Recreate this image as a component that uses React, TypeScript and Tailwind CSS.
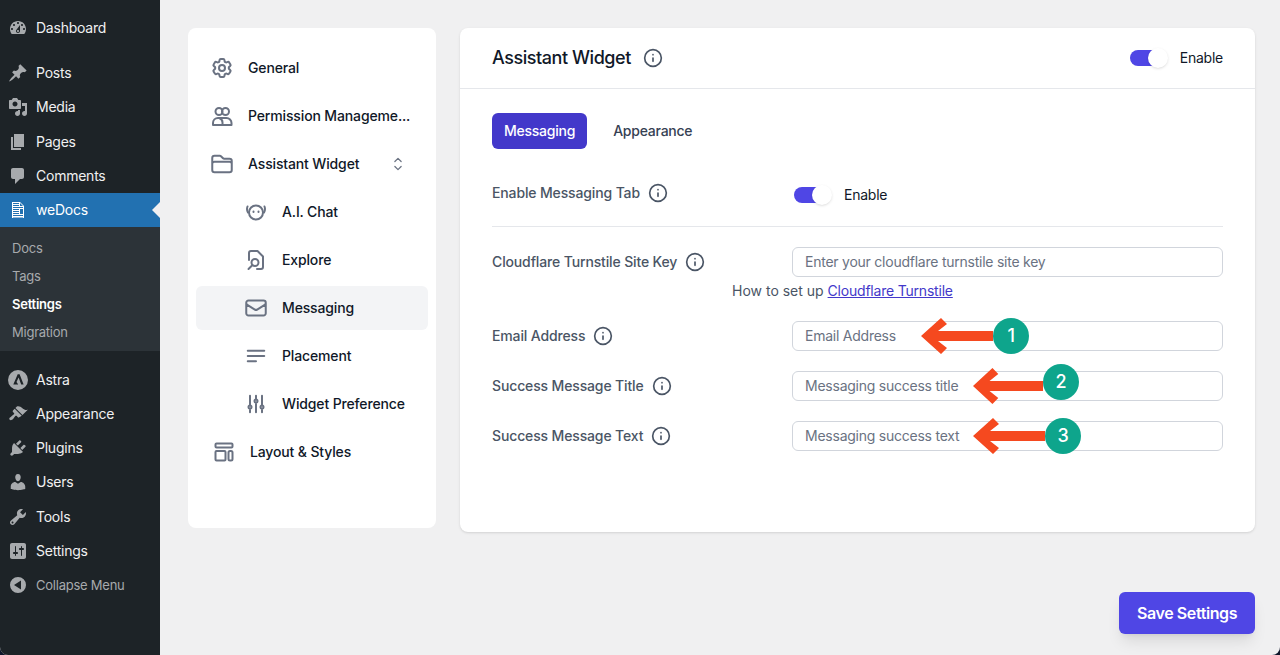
import clsx from 'clsx';
import { Info } from 'lucide-react';
import type { ReactNode } from 'react';
import {
  HiOutlineAdjustmentsVertical,
  HiOutlineBars3BottomLeft,
  HiOutlineChevronUpDown,
  HiOutlineCog6Tooth,
  HiOutlineEnvelope,
  HiOutlineFolder,
} from 'react-icons/hi2';

// wp-admin menu glyphs, 20x20 box
const WP_ICONS: Record<string, string> = {
  dashboard:
    'M3.76 16h12.48c1.1-1.37 1.76-3.11 1.76-5 0-4.42-3.58-8-8-8s-8 3.58-8 8c0 1.89.66 3.63 1.76 5zM10 4c.55 0 1 .45 1 1s-.45 1-1 1-1-.45-1-1 .45-1 1-1zM6 6c.55 0 1 .45 1 1s-.45 1-1 1-1-.45-1-1 .45-1 1-1zm8 0c.55 0 1 .45 1 1s-.45 1-1 1-1-.45-1-1 .45-1 1-1zm-5.37 5.55L12 7v6c0 1.1-.9 2-2 2s-2-.9-2-2c0-.57.24-1.08.63-1.45zM4 10c.55 0 1 .45 1 1s-.45 1-1 1-1-.45-1-1 .45-1 1-1zm12 0c.55 0 1 .45 1 1s-.45 1-1 1-1-.45-1-1 .45-1 1-1zm-5 3c0-.55-.45-1-1-1s-1 .45-1 1 .45 1 1 1 1-.45 1-1z',
  pin: 'M10.44 3.02l1.82-1.82 6.36 6.35-1.83 1.82c-1.05-.68-2.48-.57-3.41.36l-.75.75c-.92.93-1.04 2.35-.35 3.41l-1.83 1.82-2.41-2.41-2.8 2.79c-.42.42-3.38 2.71-3.8 2.29s1.86-3.39 2.28-3.81l2.79-2.79L4.1 9.36l1.83-1.82c1.05.69 2.48.57 3.4-.36l.75-.75c.93-.92 1.05-2.35.36-3.41z',
  media:
    'M13 11V4c0-.55-.45-1-1-1h-1.67L9 1H5L3.67 3H2c-.55 0-1 .45-1 1v7c0 .55.45 1 1 1h10c.55 0 1-.45 1-1zM7 4.5c1.38 0 2.5 1.12 2.5 2.5S8.38 9.5 7 9.5 4.5 8.38 4.5 7 5.62 4.5 7 4.5zM14 6h5v10.5c0 1.38-1.12 2.5-2.5 2.5S14 17.88 14 16.5s1.12-2.5 2.5-2.5c.17 0 .34.02.5.05V9h-3V6zm-4 8.05V13h2v3.5c0 1.38-1.12 2.5-2.5 2.5S7 17.88 7 16.5 8.12 14 9.5 14c.17 0 .34.02.5.05z',
  page: 'M6 15V2h10v13H6zm-1 1h8v2H3V5h2v11z',
  comments:
    'M5 2h9c1.1 0 2 .9 2 2v7c0 1.1-.9 2-2 2h-2l-5 5v-5H5c-1.1 0-2-.9-2-2V4c0-1.1.9-2 2-2z',
  document:
    'M12 2l4 4v12H4V2h8zM5 3v1h6V3H5zm7 3h3l-3-3v3zM5 5v1h6V5H5zm10 3V7H5v1h10zM5 9v1h6V9H5zm7 0v5h3V9h-3zM5 11v1h6v-1H5zm0 2v1h6v-1H5zm0 2v1h10v-1H5zm0 2v.5h10V17H5z',
  astra:
    'M10 0a10 10 0 1 0 0 20 10 10 0 0 0 0-20zm-.3 4.2h1.9l4 10.3h-2.4l-2.6-7-2.1 4.6 1.7 2.4H6.600l-1.300 0z',
  appearance:
    'M14.48 11.06L7.41 3.99l1.5-1.5c.5-.56 2.3-.47 3.51.32 1.21.8 1.43 1.28 2.91 2.1 1.18.64 2.45 1.26 4.45.85zm-.71.71L6.7 4.7 4.93 6.47c-.39.39-.39 1.02 0 1.41l1.06 1.06c.39.39.39 1.03 0 1.42-.6.6-1.43 1.11-2.21 1.69-.35.26-.7.53-1.01.84C1.43 13.23.7 14.8 1.72 15.82c.95.95 2.63-.02 3.1-.48.31-.31.58-.66.84-1.01.58-.78 1.1-1.6 1.7-2.21.39-.39 1.02-.39 1.41 0l1.06 1.06c.39.39 1.02.39 1.41 0z',
  plugins:
    'M13.11 4.36L9.87 7.6 8 5.73l3.24-3.24c.35-.34 1.05-.2 1.56.32.52.51.66 1.21.31 1.55zm-8 1.77l.91-1.12 9.01 9.01-1.19.84c-.71.71-2.63 1.16-3.82 1.16H6.14L4.9 17.26c-.59.59-1.54.59-2.12 0-.59-.58-.59-1.53 0-2.12l1.24-1.24v-3.88c0-1.13.4-3.19 1.09-3.89zm7.26 3.97l3.24-3.24c.34-.35 1.04-.21 1.55.31.52.51.66 1.21.31 1.55l-3.24 3.25z',
  users:
    'M10 9.25c-2.27 0-2.73-3.44-2.73-3.44C7 4.02 7.82 2 9.97 2c2.16 0 2.98 2.02 2.71 3.81 0 0-.41 3.44-2.68 3.44zm0 2.57L12.72 10c2.39 0 4.52 2.33 4.52 4.53v2.49s-3.65 1.13-7.24 1.13c-3.65 0-7.24-1.13-7.24-1.13v-2.49c0-2.25 1.94-4.48 4.47-4.48z',
  tools:
    'M16.68 9.77c-1.34 1.34-3.3 1.67-4.95.99l-5.41 6.52c-.99.99-2.59.99-3.58 0s-.99-2.59 0-3.57l6.52-5.42c-.68-1.65-.35-3.61.99-4.95 1.28-1.28 3.12-1.62 4.72-1.06l-2.89 2.89 2.82 2.82 2.86-2.87c.53 1.58.18 3.39-1.08 4.65zM3.81 16.21c.4.39 1.04.39 1.43 0 .4-.4.4-1.04 0-1.43-.39-.4-1.03-.4-1.43 0-.39.39-.39 1.03 0 1.43z',
  settings:
    'M18 16V4c0-1.1-.9-2-2-2H4c-1.1 0-2 .9-2 2v12c0 1.1.9 2 2 2h12c1.1 0 2-.9 2-2zM8 11h1c.55 0 1 .45 1 1s-.45 1-1 1H8v1.5c0 .28-.22.5-.5.5s-.5-.22-.5-.5V13H6c-.55 0-1-.45-1-1s.45-1 1-1h1V5.500c0-.28.22-.5.5-.5s.5.22.5.5V11zm5-2h-1c-.55 0-1-.45-1-1s.45-1 1-1h1V5.500c0-.28.22-.5.5-.5s.5.22.5.5V7h1c.55 0 1 .45 1 1s-.45 1-1 1h-1v5.500c0 .28-.22.5-.5.5s-.5-.22-.5-.5V9z',
  collapse:
    'M10 2a8 8 0 1 0 0 16 8 8 0 0 0 0-16zm3 3.500v9L6 10z',
};

function WpIcon({ name, className }: { name: string; className?: string }) {
  return (
    <svg viewBox="0 0 20 20" className={clsx('size-5 shrink-0 fill-current', className)}>
      <path fillRule="evenodd" d={WP_ICONS[name]} />
    </svg>
  );
}

function MenuItem({
  icon,
  label,
  active,
  muted,
  className,
}: {
  icon: string;
  label: string;
  active?: boolean;
  muted?: boolean;
  className?: string;
}) {
  return (
    <div
      className={clsx(
        'relative flex h-8.5 items-center gap-2 pl-2 text-sm',
        active ? 'bg-[#2271b1] text-white' : muted ? 'text-[#a7aaad]' : 'text-[#f0f0f1]',
        className,
      )}
    >
      <WpIcon name={icon} className={active ? 'text-white' : 'text-[#a7aaad]'} />
      <span>{label}</span>
      {active ? (
        <span className="absolute right-0 border-y-8 border-r-8 border-y-transparent border-r-[#f0f0f1]" />
      ) : null}
    </div>
  );
}

function AdminMenu() {
  return (
    <aside className="flex w-40 shrink-0 flex-col bg-[#1d2327] pt-2.5">
      <MenuItem icon="dashboard" label="Dashboard" className="h-9" />
      <MenuItem icon="pin" label="Posts" className="mt-2.5" />
      <MenuItem icon="media" label="Media" />
      <MenuItem icon="page" label="Pages" className="mt-px" />
      <MenuItem icon="comments" label="Comments" />
      <MenuItem icon="document" label="weDocs" active />
      <div className="flex flex-col bg-[#2c3338] pt-2 pb-1 text-[13px] text-[#a7aaad]">
        <div className="flex h-7 items-center pl-3">Docs</div>
        <div className="flex h-7 items-center pl-3">Tags</div>
        <div className="flex h-7 items-center pl-3 font-semibold text-white">Settings</div>
        <div className="flex h-7 items-center pl-3">Migration</div>
      </div>
      <MenuItem icon="astra" label="Astra" className="mt-3" />
      <MenuItem icon="appearance" label="Appearance" />
      <MenuItem icon="plugins" label="Plugins" />
      <MenuItem icon="users" label="Users" />
      <MenuItem icon="tools" label="Tools" className="mt-px" />
      <MenuItem icon="settings" label="Settings" />
      <MenuItem icon="collapse" label="Collapse Menu" muted className="text-[13px]" />
    </aside>
  );
}

function OutlineSvg({ children }: { children: ReactNode }) {
  return (
    <svg
      viewBox="0 0 24 24"
      fill="none"
      stroke="currentColor"
      strokeWidth={1.5}
      strokeLinecap="round"
      strokeLinejoin="round"
      className="size-6 shrink-0"
    >
      {children}
    </svg>
  );
}

const PeopleIcon = () => (
  <OutlineSvg>
    <circle cx="9" cy="7.500" r="3.500" />
    <circle cx="15.500" cy="7.500" r="3.500" />
    <path d="M3 21v-2a5 5 0 0 1 5-5h8.500a5 5 0 0 1 5 5v2z" />
    <path d="M12.500 21v-2.500a4.500 4.500 0 0 0-3-4.200" />
  </OutlineSvg>
);

const BotIcon = () => (
  <OutlineSvg>
    <circle cx="12" cy="12.500" r="7" />
    <path d="M3.500 6.500c-.8 2-.6 4 .500 6M20.500 6.500c.8 2 .6 4-.500 6" />
    <path d="M9.500 11.500v.5M14.500 11.500v.5" />
  </OutlineSvg>
);

const ExploreIcon = () => (
  <OutlineSvg>
    <path d="M5 12V5a2 2 0 0 1 2-2h6.500L19 8.500V19a2 2 0 0 1-2 2h-4" />
    <circle cx="11" cy="14.500" r="3.500" />
    <path d="M8.500 17 4.500 21" />
  </OutlineSvg>
);

const LayoutIcon = () => (
  <OutlineSvg>
    <rect x="3.500" y="3.500" width="17" height="4" rx="1" />
    <rect x="3.500" y="11" width="10" height="9.500" rx="1" />
    <rect x="16.500" y="11" width="4" height="9.500" rx="1.500" />
  </OutlineSvg>
);

function NavRow({
  icon,
  label,
  sub,
  active,
  trailing,
  className,
}: {
  icon: ReactNode;
  label: string;
  sub?: boolean;
  active?: boolean;
  trailing?: ReactNode;
  className?: string;
}) {
  return (
    <div
      className={clsx(
        'flex h-11 items-center gap-3.5 rounded-md text-sm font-medium tracking-[-0.01em] text-gray-900',
        sub ? 'pl-12' : 'pl-3.5',
        active && 'bg-gray-100',
        className,
      )}
    >
      <span className="text-gray-500 [&>svg]:size-6 [&>svg]:stroke-2">{icon}</span>
      <span className="w-41 whitespace-nowrap">{label}</span>
      {trailing}
    </div>
  );
}

function SettingsNav() {
  return (
    <nav className="flex h-125 w-62 shrink-0 flex-col gap-1 rounded-lg bg-white px-2 pt-4.5">
      <NavRow icon={<HiOutlineCog6Tooth />} label="General" />
      <NavRow icon={<PeopleIcon />} label="Permission Manageme..." />
      <NavRow
        icon={<HiOutlineFolder />}
        label="Assistant Widget"
        trailing={<HiOutlineChevronUpDown className="-ml-9.5 size-5 text-gray-500" />}
      />
      <NavRow icon={<BotIcon />} label="A.I. Chat" sub />
      <NavRow icon={<ExploreIcon />} label="Explore" sub />
      <NavRow icon={<HiOutlineEnvelope />} label="Messaging" sub active />
      <NavRow icon={<HiOutlineBars3BottomLeft />} label="Placement" sub />
      <NavRow icon={<HiOutlineAdjustmentsVertical />} label="Widget Preference" sub />
      <NavRow icon={<LayoutIcon />} label="Layout & Styles" className="gap-3 pl-4" />
    </nav>
  );
}

function Toggle() {
  return (
    <div className="flex items-center gap-3 text-sm text-gray-900">
      <span className="relative mr-1.5 h-4 w-8 rounded-full bg-[#4f46e5]">
        <span className="absolute -top-0.5 -right-1.5 size-5 rounded-full bg-white shadow" />
      </span>
      Enable
    </div>
  );
}

function Label({ text, className }: { text: string; className?: string }) {
  return (
    <div
      className={clsx(
        'flex w-75 shrink-0 items-center gap-2 text-sm font-medium tracking-[-0.01em] text-gray-600',
        className,
      )}
    >
      {text}
      <Info className="size-5 text-gray-600" />
    </div>
  );
}

function Callout({
  number,
  className,
  arrowClass,
  badgeClass,
}: {
  number: number;
  className: string;
  arrowClass: string;
  badgeClass?: string;
}) {
  return (
    <div className={clsx('absolute top-1/2 flex -translate-y-1/2 items-center', className)}>
      <svg viewBox="0 0 72 38" preserveAspectRatio="none" className={clsx('h-9.5 fill-[#f5491f]', arrowClass)}>
        <path d="M0 19 20 1l6 6-9 7h55v10H17l9 7-6 6z" />
      </svg>
      <span
        className={clsx(
          'flex size-9 items-center justify-center rounded-full bg-[#0ea58c] text-lg font-medium text-white',
          badgeClass,
        )}
      >
        {number}
      </span>
    </div>
  );
}

function TextRow({
  label,
  placeholder,
  children,
}: {
  label: string;
  placeholder: string;
  children?: ReactNode;
}) {
  return (
    <div className="mt-5 flex items-center">
      <Label text={label} />
      <div className="relative flex h-7.5 flex-1 items-center rounded-md border border-gray-300 bg-white pl-3 text-sm text-gray-500">
        {placeholder}
        {children}
      </div>
    </div>
  );
}

function WidgetPanel() {
  return (
    <section className="h-126 flex-1 rounded-lg bg-white shadow-sm">
      <header className="box-content flex h-15 items-center justify-between border-b border-gray-200 px-8">
        <div className="flex items-center gap-3 text-lg font-medium tracking-tight text-gray-900">
          Assistant Widget
          <Info className="size-5 text-gray-600" />
        </div>
        <Toggle />
      </header>
      <div className="px-8 pt-6">
        <div className="flex items-center gap-6.5 text-sm font-medium">
          <span className="flex h-9 items-center rounded-md bg-[#4338ca] px-3 text-white">Messaging</span>
          <span className="text-gray-700">Appearance</span>
        </div>
        <div className="mt-7.5 flex h-8 items-center">
          <Label text="Enable Messaging Tab" className="-mt-1" />
          <div className="pl-0.5">
            <Toggle />
          </div>
        </div>
        <div className="mt-3.75 border-t border-gray-200" />
        <TextRow label="Cloudflare Turnstile Site Key" placeholder="Enter your cloudflare turnstile site key" />
        <p className="mt-1 pl-60 text-sm tracking-normal text-gray-600">
          How to set up{' '}
          <a className="tracking-[-0.015em] text-[#4338ca] underline">Cloudflare Turnstile</a>
        </p>
        <TextRow label="Email Address" placeholder="Email Address">
          <Callout number={1} className="left-32" arrowClass="w-18" />
        </TextRow>
        <TextRow label="Success Message Title" placeholder="Messaging success title">
          <Callout number={2} className="left-45" arrowClass="w-17.5" badgeClass="-mt-2" />
        </TextRow>
        <TextRow label="Success Message Text" placeholder="Messaging success text">
          <Callout number={3} className="left-45" arrowClass="w-18" />
        </TextRow>
      </div>
    </section>
  );
}

export default function App() {
  return (
    <div className="h-screen overflow-hidden bg-slate-900 font-[family-name:Inter,sans-serif] tracking-[-0.015em]">
      <div className="flex h-full overflow-hidden rounded-b-lg bg-[#f0f0f1]">
        <AdminMenu />
        <main className="flex flex-1 flex-col pt-7 pr-6.25 pl-7">
          <div className="flex gap-6">
            <SettingsNav />
            <WidgetPanel />
          </div>
          <div className="mt-15 flex justify-end">
            <button className="h-10.5 w-34 rounded-md bg-[#4f46e5] text-base font-semibold tracking-tight text-white shadow-lg">
              Save Settings
            </button>
          </div>
        </main>
      </div>
    </div>
  );
}
